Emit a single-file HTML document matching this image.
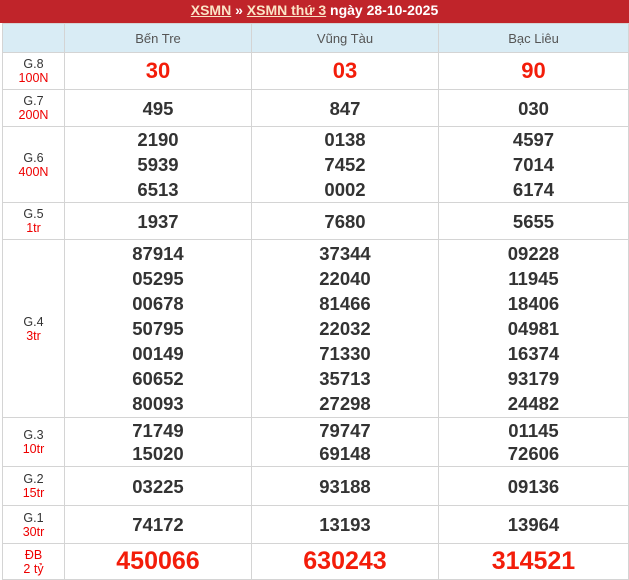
<!DOCTYPE html><html><head><meta charset="utf-8"><style>
*{margin:0;padding:0;box-sizing:border-box}
body{width:629px;height:571px;overflow:hidden;background:#fff;font-family:"Liberation Sans",Arial,sans-serif;position:relative}
.top{position:absolute;left:0;top:0;width:629px;height:23px;background:#c0242a;color:#fff;font-weight:bold;font-size:14px;text-align:center;line-height:21px}
.top u{color:#fbe3c6;text-decoration:underline}
table{position:absolute;left:2px;top:23px;width:626px;border-collapse:collapse;table-layout:fixed}
td{border:1px solid #d4d4d4;text-align:center;vertical-align:middle;padding:0}
tr.h td{background:#d9ecf5;color:#555;font-size:13px;height:29px}
td.l{font-size:12.5px;color:#333;line-height:14px}
td.l span{color:#e00}
td.n{font-size:18.5px;font-weight:bold;color:#333;line-height:25px}
td.r{font-size:22px;font-weight:bold;color:#f31d0a}
td.b{font-size:25px;font-weight:bold;color:#f31d0a}
tr.g3 td.n{line-height:23.5px}
</style></head><body>
<div class="top"><u>XSMN</u> » <u>XSMN thứ 3</u> ngày 28-10-2025</div>
<table>
<col style="width:62px"><col style="width:187px"><col style="width:187px"><col style="width:190px">
<tr class="h"><td></td><td>Bến Tre</td><td>Vũng Tàu</td><td>Bạc Liêu</td></tr>
<tr style="height:37px"><td class="l">G.8<br><span>100N</span></td><td class="r">30</td><td class="r">03</td><td class="r">90</td></tr>
<tr style="height:37px"><td class="l">G.7<br><span>200N</span></td><td class="n">495</td><td class="n">847</td><td class="n">030</td></tr>
<tr style="height:76px"><td class="l">G.6<br><span>400N</span></td><td class="n">2190<br>5939<br>6513</td><td class="n">0138<br>7452<br>0002</td><td class="n">4597<br>7014<br>6174</td></tr>
<tr style="height:37px"><td class="l">G.5<br><span>1tr</span></td><td class="n">1937</td><td class="n">7680</td><td class="n">5655</td></tr>
<tr style="height:178px"><td class="l">G.4<br><span>3tr</span></td><td class="n">87914<br>05295<br>00678<br>50795<br>00149<br>60652<br>80093</td><td class="n">37344<br>22040<br>81466<br>22032<br>71330<br>35713<br>27298</td><td class="n">09228<br>11945<br>18406<br>04981<br>16374<br>93179<br>24482</td></tr>
<tr class="g3" style="height:49px"><td class="l">G.3<br><span>10tr</span></td><td class="n">71749<br>15020</td><td class="n">79747<br>69148</td><td class="n">01145<br>72606</td></tr>
<tr style="height:39px"><td class="l">G.2<br><span>15tr</span></td><td class="n">03225</td><td class="n">93188</td><td class="n">09136</td></tr>
<tr style="height:38px"><td class="l">G.1<br><span>30tr</span></td><td class="n">74172</td><td class="n">13193</td><td class="n">13964</td></tr>
<tr style="height:36px"><td class="l"><span>ĐB<br>2 tỷ</span></td><td class="b">450066</td><td class="b">630243</td><td class="b">314521</td></tr>
</table>
</body></html>
